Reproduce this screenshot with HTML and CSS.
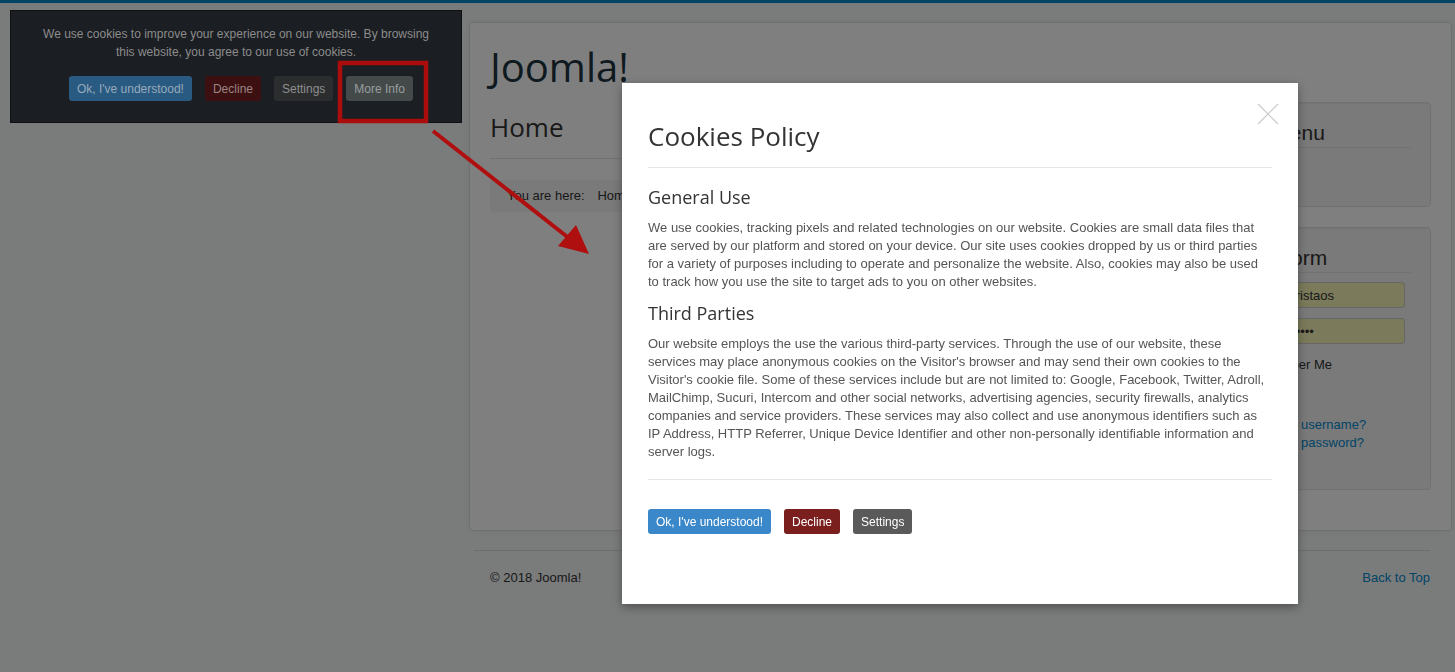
FILE: index.html
```html
<!DOCTYPE html>
<html lang="en">
<head>
    <meta charset="UTF-8">
    <meta name="viewport" content="width=device-width, initial-scale=1.0">
    <title>Home</title>
    <link rel="stylesheet" href="styles.css">
</head>
<body>
    <div class="site">
        <div class="container">
            <header class="header">
                <a class="brand" href="#">Joomla!</a>
            </header>

            <div class="row">
                <main class="main">
                    <h2 class="page-title">Home</h2>
                    <hr class="divider">
                    <div class="breadcrumb">You are here: &nbsp; <span class="crumb">Home</span></div>
                </main>

                <aside class="sidebar">
                    <div class="well">
                        <h3 class="page-header">Main Menu</h3>
                        <ul class="menu">
                            <li><a href="#">Home</a></li>
                        </ul>
                    </div>

                    <div class="well">
                        <h3 class="page-header">Login Form</h3>
                        <div class="input-prepend">
                            <span class="add-on"></span>
                            <input class="field" type="text" value="christaos">
                        </div>
                        <div class="input-prepend">
                            <span class="add-on"></span>
                            <input class="field" type="password" value="secretp">
                        </div>
                        <label class="remember"><input type="checkbox"> Remember Me</label>
                        <button class="btn-login">Log in</button>
                        <ul class="login-links">
                            <li><a href="#">Forgot your username?</a></li>
                            <li><a href="#">Forgot your password?</a></li>
                        </ul>
                    </div>
                </aside>
            </div>
        </div>

        <footer class="footer">
            <hr class="footer-line">
            <div class="footer-row">
                <span>&copy; 2018 Joomla!</span>
                <a href="#">Back to Top</a>
            </div>
        </footer>
    </div>

    <!-- cookie bar -->
    <div class="cookie-bar">
        <p>We use cookies to improve your experience on our website. By browsing this website, you agree to our use of cookies.</p>
        <div class="cookie-actions">
            <button class="cb cb-ok">Ok, I've understood!</button>
            <button class="cb cb-decline">Decline</button>
            <button class="cb cb-settings">Settings</button>
            <button class="cb cb-info">More Info</button>
        </div>
    </div>

    <div class="backdrop"></div>

    <div class="modal">
        <svg class="modal-close" width="22" height="22" viewBox="0 0 22 22">
            <path d="M1 1 L21 21 M21 1 L1 21" stroke="#c9c9c9" stroke-width="1.2" fill="none"/>
        </svg>
        <h2 class="modal-title">Cookies Policy</h2>
        <hr class="modal-line">
        <h3 class="modal-sub">General Use</h3>
        <p class="modal-text">We use cookies, tracking pixels and related technologies on our website. Cookies are small data files that are served by our platform and stored on your device. Our site uses cookies dropped by us or third parties for a variety of purposes including to operate and personalize the website. Also, cookies may also be used to track how you use the site to target ads to you on other websites.</p>
        <h3 class="modal-sub">Third Parties</h3>
        <p class="modal-text">Our website employs the use the various third-party services. Through the use of our website, these services may place anonymous cookies on the Visitor's browser and may send their own cookies to the Visitor's cookie file. Some of these services include but are not limited to: Google, Facebook, Twitter, Adroll, MailChimp, Sucuri, Intercom and other social networks, advertising agencies, security firewalls, analytics companies and service providers. These services may also collect and use anonymous identifiers such as IP Address, HTTP Referrer, Unique Device Identifier and other non-personally identifiable information and server logs.</p>
        <hr class="modal-line modal-line-bottom">
        <div class="modal-actions">
            <button class="mb mb-ok">Ok, I've understood!</button>
            <button class="mb mb-decline">Decline</button>
            <button class="mb mb-settings">Settings</button>
        </div>
    </div>

    <!-- annotation -->
    <svg class="annotation" width="1455" height="672" viewBox="0 0 1455 672">
        <rect x="340" y="63" width="86" height="58" fill="none" stroke="#ab0c0c" stroke-width="4.5"/>
        <line x1="433" y1="131" x2="570" y2="239" stroke="#b00f0f" stroke-width="4"/>
        <polygon points="589,254 558,246 576,225" fill="#b00f0f"/>
    </svg>
</body>
</html>
```

FILE: styles.css
```css
body {
    margin: 0;
    border-top: 3px solid #0088cc;
    background: #f4f6f7;
    font-family: "Liberation Sans", Arial, sans-serif;
    font-size: 13px;
    line-height: 18px;
    color: #333;
}
a {
    color: #0088cc;
    text-decoration: none;
}
.site {
    padding: 19px 3px 40px 469px;
}
.container {
    background: #fff;
    border: 1px solid #dedede;
    border-radius: 4px;
    padding: 20px;
    box-shadow: 0 0 6px rgba(0,0,0,0.05);
}
.brand {
    display: block;
    font-family: "Open Sans", sans-serif;
    font-size: 40px;
    line-height: 48px;
    color: #1d3440;
}
.row {
    display: flex;
    gap: 25px;
    margin-top: 11px;
}
.main {
    flex: 1;
}
.page-title {
    font-family: "Open Sans", sans-serif;
    font-weight: normal;
    font-size: 26px;
    line-height: 36px;
    margin: 7px 0 0;
}
.divider {
    border: 0;
    border-top: 1px solid #e5e5e5;
    margin: 13px 0 0;
}
.breadcrumb {
    margin-top: 21px;
    padding: 7px 17px;
    background: #f5f5f5;
    border-radius: 4px;
}
.crumb {
    margin-left: 2px;
}
.sidebar {
    width: 230px;
}
.well {
    background: #f5f5f5;
    border: 1px solid #e3e3e3;
    border-radius: 4px;
    padding: 19px;
    margin-bottom: 20px;
    box-shadow: inset 0 1px 1px rgba(0,0,0,0.05);
}
.well + .well {
    margin-top: 1px;
}
.page-header {
    font-weight: normal;
    font-size: 21px;
    line-height: 24px;
    margin: -1px 0 0;
    padding-bottom: 2px;
    border-bottom: 1px solid #e5e5e5;
}
.menu {
    list-style: none;
    margin: 10px 0 11px;
    padding: 0;
}
.input-prepend {
    display: flex;
    width: 184px;
    margin-top: 9px;
}
.input-prepend + .input-prepend {
    margin-top: 10px;
}
.add-on {
    width: 28px;
    height: 24px;
    border: 1px solid #ccc;
    border-radius: 4px 0 0 4px;
    background: #eee;
}
.field {
    flex: 1;
    min-width: 0;
    height: 26px;
    box-sizing: border-box;
    border: 1px solid #ccc;
    border-left: 0;
    border-radius: 0 4px 4px 0;
    background: #f6f6b6;
    padding: 0 4px 0 31px;
    font-family: "Liberation Sans", Arial, sans-serif;
    font-size: 13px;
    color: #333;
}
.remember {
    display: flex;
    align-items: center;
    gap: 6px;
    margin: 12px 0 0 6px;
}
.remember input {
    margin: 0;
}
.btn-login {
    display: block;
    margin: 7px 0;
    height: 28px;
    padding: 0 12px;
    border: 1px solid #ccc;
    border-radius: 4px;
    background: #fff;
    font-family: "Liberation Sans", Arial, sans-serif;
    font-size: 13px;
}
.login-links {
    list-style: none;
    margin: 0 0 18px 10px;
    padding: 0;
}
.footer {
    padding-right: 22px;
}
.footer-line {
    border: 0;
    border-top: 1px solid #dcdcdc;
    margin: 19px 0 0 5px;
}
.footer-row {
    display: flex;
    justify-content: space-between;
    margin: 18px 0 0 21px;
}

/* cookie bar */
.cookie-bar {
    position: absolute;
    top: 10px;
    left: 10px;
    z-index: 3;
    width: 450px;
    height: 111px;
    background: #1b1e22;
    border: 1px solid #0f1113;
    text-align: center;
    font-size: 12px;
    line-height: 18px;
    color: #8c8c8c;
}
.cookie-bar p {
    margin: 14px 29px 0;
}
.cookie-actions {
    display: flex;
    justify-content: center;
    gap: 13px;
    margin-top: 15px;
    padding-left: 10px;
}
.cb {
    height: 25px;
    padding: 0 8px;
    border: 0;
    border-radius: 3px;
    font-family: "Liberation Sans", Arial, sans-serif;
    font-size: 12px;
}
.cb-ok {
    background: #295a82;
    color: #97aabb;
}
.cb-decline {
    background: #3c1011;
    color: #9a8484;
}
.cb-settings {
    background: #2c2d2f;
    color: #8e8e8e;
}
.cb-info {
    background: #444a4a;
    color: #989e9e;
}

.backdrop {
    position: fixed;
    inset: 0;
    z-index: 2;
    background: rgba(0,0,0,0.5);
}

/* modal */
.modal {
    position: absolute;
    top: 83px;
    left: 622px;
    z-index: 4;
    width: 624px;
    padding: 35px 26px 70px;
    background: #fff;
    box-shadow: 0 3px 9px rgba(0,0,0,0.35);
}
.modal-close {
    position: absolute;
    top: 20px;
    right: 19px;
}
.modal-title {
    font-family: "Open Sans", sans-serif;
    font-weight: normal;
    font-size: 26px;
    line-height: 36px;
    color: #333;
    margin: 0;
}
.modal-line {
    border: 0;
    border-top: 1px solid #e5e5e5;
    margin: 13px 0 17px;
}
.modal-line-bottom {
    margin: 18px 0 29px;
}
.modal-sub {
    font-family: "Open Sans", sans-serif;
    font-weight: normal;
    font-size: 18px;
    line-height: 24px;
    color: #333;
    margin: 0;
}
.modal-text {
    margin: 10px 0;
    color: #555;
}
.modal-text:last-of-type {
    margin-bottom: 0;
}
.modal-actions {
    display: flex;
    gap: 13px;
}
.mb {
    height: 25px;
    padding: 0 8px;
    border: 0;
    border-radius: 3px;
    color: #fff;
    font-family: "Liberation Sans", Arial, sans-serif;
    font-size: 12px;
}
.mb-ok {
    background: #3a87c9;
}
.mb-decline {
    background: #7a1e1e;
}
.mb-settings {
    background: #5a5a5a;
}

.annotation {
    position: absolute;
    top: 0;
    left: 0;
    z-index: 5;
    pointer-events: none;
}
```
